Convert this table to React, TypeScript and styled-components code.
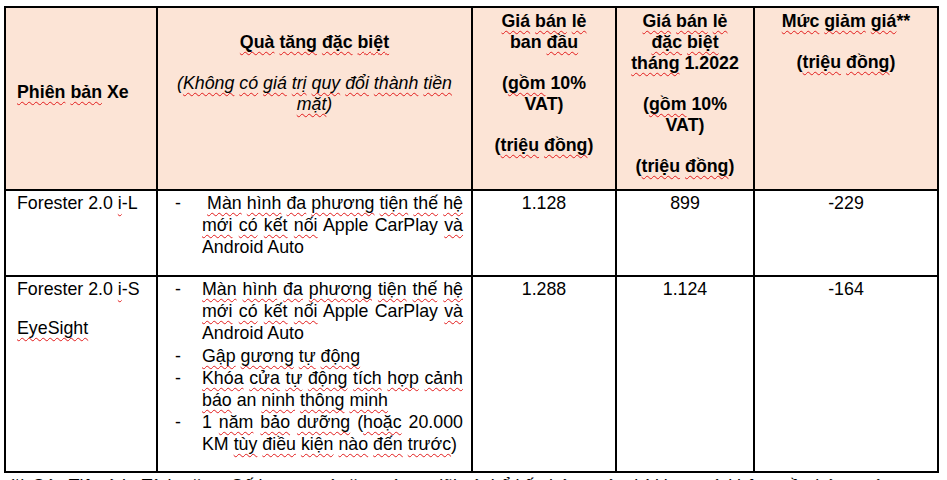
import React from 'react';
import styled, { createGlobalStyle } from 'styled-components';

const GlobalStyle = createGlobalStyle`
  html, body {
    margin: 0;
    padding: 0;
    background: #ffffff;
  }
  body {
    font-family: "Liberation Sans", Arial, sans-serif;
    color: #000000;
  }
`;

// words the spell checker leaves alone
const PLAIN = new Set([
  'Xe', 'ban', '10%', 'VAT', '1.2022', 'Forester', '2.0', 'Apple', 'CarPlay',
  'Android', 'Auto', 'an', '1', '20.000', 'KM',
]);

const Page = styled.div`
  padding: 6px 0 0 4px;
  width: 943px;
  height: 480px;
  overflow: hidden;
  box-sizing: border-box;
`;

const PriceTable = styled.table`
  border-collapse: collapse;
  table-layout: fixed;
  width: 935px;
  font-size: 17.8px;
`;

const HeadRow = styled.tr`
  height: 183px;
  background: #fce4d6;
`;

const BodyRow = styled.tr<{ $height: number }>`
  height: ${p => p.$height}px;
`;

const HeadCell = styled.th<{ $align?: 'left' | 'center'; $middle?: boolean; $top?: number }>`
  border: 2px solid #000;
  vertical-align: ${p => (p.$middle ? 'middle' : 'top')};
  text-align: ${p => p.$align ?? 'center'};
  padding: ${p => (p.$middle ? '0 4px 13px 11px' : `${p.$top ?? 3}px 4px 0`)};
  font-weight: bold;
  line-height: 21px;
`;

const HeadPara = styled.div<{ $gap?: number; $italic?: boolean }>`
  & + & {
    margin-top: ${p => p.$gap ?? 17}px;
  }
  font-style: ${p => (p.$italic ? 'italic' : 'normal')};
  font-weight: ${p => (p.$italic ? 'normal' : 'bold')};
`;

const Cell = styled.td<{ $align?: 'left' | 'center' }>`
  border: 2px solid #000;
  vertical-align: top;
  text-align: ${p => p.$align ?? 'center'};
  padding: ${p => (p.$align === 'left' ? '1px 4px 0 11px' : '1px 4px 0')};
  line-height: 22.2px;
`;

const BodyPara = styled.div`
  & + & {
    margin-top: 17px;
  }
`;

const GiftCell = styled.td`
  border: 2px solid #000;
  vertical-align: top;
  padding: 1px 8px 0 17px;
  line-height: 22.2px;
`;

const GiftList = styled.ul`
  list-style: none;
  margin: 0;
  padding: 0;
`;

const GiftItem = styled.li`
  display: grid;
  grid-template-columns: 27px 1fr;
  text-align: justify;
`;

const Dash = styled.span`
  text-align: left;
`;

const Wavy = styled.span`
  text-decoration-line: underline;
  text-decoration-style: wavy;
  text-decoration-color: #e21b1b;
  text-decoration-thickness: 1px;
  text-underline-offset: 3px;
  text-decoration-skip-ink: none;
`;

const Footnote = styled.div`
  margin-top: 3px;
  padding-left: 3px;
  font-size: 17.8px;
  font-style: italic;
  line-height: 20px;
  white-space: nowrap;
`;

const Marked: React.FC<{ text: string }> = ({ text }) => (
  <>
    {text.split(' ').map((word, i) => {
      const m = word.match(/^(\(*)(.*?)([)*,]*)$/);
      const lead = m ? m[1] : '';
      const core = m ? m[2] : word;
      const tail = m ? m[3] : '';
      return (
        <React.Fragment key={i}>
          {i > 0 && ' '}
          {lead}
          {PLAIN.has(core) || !core ? core : <Wavy>{core}</Wavy>}
          {tail}
        </React.Fragment>
      );
    })}
  </>
);

const screenText = ['Màn hình đa phương tiện thế hệ mới có kết nối', 'Apple CarPlay và Android Auto'];

const App: React.FC = () => {
  return (
    <>
      <GlobalStyle />
      <Page>
        <PriceTable>
          <colgroup>
            <col style={{ width: 152 }} />
            <col style={{ width: 315 }} />
            <col style={{ width: 144 }} />
            <col style={{ width: 138 }} />
            <col style={{ width: 184 }} />
          </colgroup>
          <thead>
            <HeadRow>
              <HeadCell $align="left" $middle>
                <Marked text="Phiên bản Xe" />
              </HeadCell>
              <HeadCell $top={24}>
                <HeadPara $gap={19}>
                  <Marked text="Quà tăng đặc biệt" />
                </HeadPara>
                <HeadPara $gap={19} $italic>
                  <Marked text="(Không có giá trị quy đổi thành tiền" />
                  <br />
                  <Marked text="mặt)" />
                </HeadPara>
              </HeadCell>
              <HeadCell>
                <HeadPara>
                  <Marked text="Giá bán lẻ" />
                  <br />
                  <Marked text="ban đầu" />
                </HeadPara>
                <HeadPara>
                  <Marked text="(gồm 10%" />
                  <br />
                  VAT)
                </HeadPara>
                <HeadPara>
                  <Marked text="(triệu đồng)" />
                </HeadPara>
              </HeadCell>
              <HeadCell>
                <HeadPara $gap={20}>
                  <Marked text="Giá bán lẻ" />
                  <br />
                  <Marked text="đặc biệt" />
                  <br />
                  <Marked text="tháng 1.2022" />
                </HeadPara>
                <HeadPara $gap={20}>
                  <Marked text="(gồm 10%" />
                  <br />
                  VAT)
                </HeadPara>
                <HeadPara $gap={20}>
                  <Marked text="(triệu đồng)" />
                </HeadPara>
              </HeadCell>
              <HeadCell>
                <HeadPara>
                  <Marked text="Mức giảm giá**" />
                </HeadPara>
                <HeadPara>
                  <Marked text="(triệu đồng)" />
                </HeadPara>
              </HeadCell>
            </HeadRow>
          </thead>
          <tbody>
            <BodyRow $height={86}>
              <Cell $align="left">
                Forester 2.0 <Wavy>i</Wavy>-L
              </Cell>
              <GiftCell>
                <GiftList>
                  <GiftItem>
                    <Dash>-</Dash>
                    <span>
                      {'\u00a0'}
                      <Marked text={screenText[0]} /> <Marked text={screenText[1]} />
                    </span>
                  </GiftItem>
                </GiftList>
              </GiftCell>
              <Cell>1.128</Cell>
              <Cell>899</Cell>
              <Cell>-229</Cell>
            </BodyRow>
            <BodyRow $height={196}>
              <Cell $align="left">
                <BodyPara>
                  Forester 2.0 <Wavy>i</Wavy>-S
                </BodyPara>
                <BodyPara>
                  <Wavy>EyeSight</Wavy>
                </BodyPara>
              </Cell>
              <GiftCell>
                <GiftList>
                  <GiftItem>
                    <Dash>-</Dash>
                    <span>
                      <Marked text={screenText[0]} /> <Marked text={screenText[1]} />
                    </span>
                  </GiftItem>
                  <GiftItem>
                    <Dash>-</Dash>
                    <span>
                      <Marked text="Gập gương tự động" />
                    </span>
                  </GiftItem>
                  <GiftItem>
                    <Dash>-</Dash>
                    <span>
                      <Marked text="Khóa cửa tự động tích hợp cảnh báo an ninh thông minh" />
                    </span>
                  </GiftItem>
                  <GiftItem>
                    <Dash>-</Dash>
                    <span>
                      <Marked text="1 năm bảo dưỡng (hoặc 20.000 KM tùy điều kiện nào đến trước)" />
                    </span>
                  </GiftItem>
                </GiftList>
              </GiftCell>
              <Cell>1.288</Cell>
              <Cell>1.124</Cell>
              <Cell>-164</Cell>
            </BodyRow>
          </tbody>
        </PriceTable>
        <Footnote>
          <Marked text="(*) Các Tiện ích, Tính năng, Số lượng quà tặng và ưu đãi có thể kết thúc trước thời hạn mà không cần báo trước." />
        </Footnote>
      </Page>
    </>
  );
};

export default App;
